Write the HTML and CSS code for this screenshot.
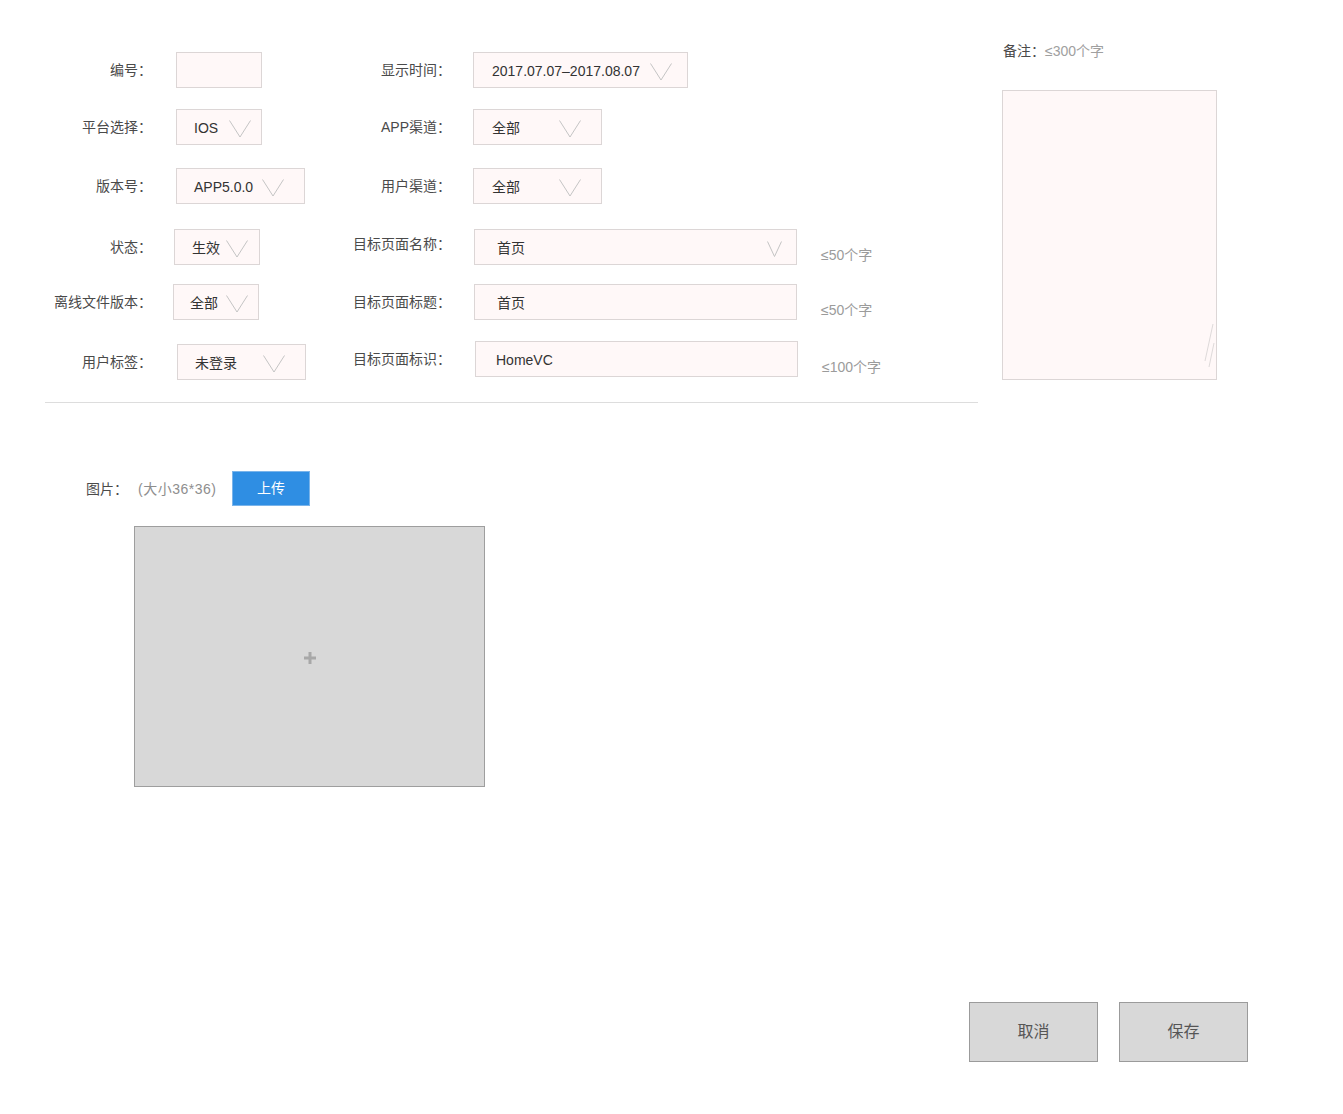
FILE: index.html
```html
<!DOCTYPE html>
<html lang="zh-CN">
<head>
<meta charset="utf-8">
<title>编辑</title>
<link rel="stylesheet" href="styles.css">
</head>
<body>
<div class="page">
  <div class="top">
    <div class="form">
      <div class="row">
        <div class="field-l">
          <span class="lbl lbl-l">编号：</span>
          <div class="box w86 ml24"></div>
        </div>
        <div class="field-r">
          <span class="lbl lbl-r">显示时间：</span>
          <div class="box sel w215 ml22 pl18 pr15"><span>2017.07.07–2017.08.07</span><svg class="chev" width="22" height="18" viewBox="0 0 22 18"><path d="M0.5 0.5 L11 17 L21.5 0.5"/></svg></div>
        </div>
      </div>
      <div class="row gap21">
        <div class="field-l">
          <span class="lbl lbl-l">平台选择：</span>
          <div class="box sel w86 ml24 pl17 pr10"><span>IOS</span><svg class="chev" width="22" height="18" viewBox="0 0 22 18"><path d="M0.5 0.5 L11 17 L21.5 0.5"/></svg></div>
        </div>
        <div class="field-r">
          <span class="lbl lbl-r">APP渠道：</span>
          <div class="box sel w129 ml22 pl18 pr20"><span>全部</span><svg class="chev" width="22" height="18" viewBox="0 0 22 18"><path d="M0.5 0.5 L11 17 L21.5 0.5"/></svg></div>
        </div>
      </div>
      <div class="row gap23">
        <div class="field-l">
          <span class="lbl lbl-l">版本号：</span>
          <div class="box sel w129 ml24 pl17 pr20"><span>APP5.0.0</span><svg class="chev" width="22" height="18" viewBox="0 0 22 18"><path d="M0.5 0.5 L11 17 L21.5 0.5"/></svg></div>
        </div>
        <div class="field-r">
          <span class="lbl lbl-r">用户渠道：</span>
          <div class="box sel w129 ml22 pl18 pr20"><span>全部</span><svg class="chev" width="22" height="18" viewBox="0 0 22 18"><path d="M0.5 0.5 L11 17 L21.5 0.5"/></svg></div>
        </div>
      </div>
      <div class="row gap25">
        <div class="field-l">
          <span class="lbl lbl-l">状态：</span>
          <div class="box sel w86 ml22 pl17 pr11"><span>生效</span><svg class="chev" width="22" height="18" viewBox="0 0 22 18"><path d="M0.5 0.5 L11 17 L21.5 0.5"/></svg></div>
        </div>
        <div class="field-r">
          <span class="lbl lbl-r up">目标页面名称：</span>
          <div class="box sel w323 ml23 pl22 pr14"><span>首页</span><svg class="chev" width="15" height="16" viewBox="0 0 15 16"><path d="M0.5 0.5 L7.5 15.5 L14.5 0.5"/></svg></div>
          <span class="hint">≤50个字</span>
        </div>
      </div>
      <div class="row gap19">
        <div class="field-l">
          <span class="lbl lbl-l">离线文件版本：</span>
          <div class="box sel w86 ml21 pl16 pr10"><span>全部</span><svg class="chev" width="22" height="18" viewBox="0 0 22 18"><path d="M0.5 0.5 L11 17 L21.5 0.5"/></svg></div>
        </div>
        <div class="field-r">
          <span class="lbl lbl-r">目标页面标题：</span>
          <div class="box w323 ml23 pl22"><span>首页</span></div>
          <span class="hint">≤50个字</span>
        </div>
      </div>
      <div class="row gap21">
        <div class="field-l low">
          <span class="lbl lbl-l">用户标签：</span>
          <div class="box sel w129 ml25 pl17 pr20"><span>未登录</span><svg class="chev" width="22" height="18" viewBox="0 0 22 18"><path d="M0.5 0.5 L11 17 L21.5 0.5"/></svg></div>
        </div>
        <div class="field-r">
          <span class="lbl lbl-r">目标页面标识：</span>
          <div class="box w323 ml24 pl20"><span>HomeVC</span></div>
          <span class="hint">≤100个字</span>
        </div>
      </div>
      <div class="divider"></div>
    </div>
    <aside class="note">
      <div class="note-head"><span class="lbl">备注：</span><span class="muted">≤300个字</span></div>
      <div class="note-area">
        <svg class="grip" width="12" height="48" viewBox="0 0 12 48"><path d="M10 1 L2 38 M11 20 L6 44"/></svg>
      </div>
    </aside>
  </div>

  <section class="upload">
    <div class="upload-row">
      <span class="lbl">图片：</span>
      <span class="upload-hint">(大小36*36)</span>
      <button class="btn-upload" type="button">上传</button>
    </div>
    <div class="pic">
      <svg width="12" height="12" viewBox="0 0 12 12"><path d="M6 0 V12 M0 6 H12"/></svg>
    </div>
  </section>

  <div class="actions">
    <button class="btn" type="button">取消</button>
    <button class="btn" type="button">保存</button>
  </div>
</div>
</body>
</html>
```

FILE: styles.css
```css
* { box-sizing: border-box; }

html, body {
  margin: 0;
  padding: 0;
  background: #ffffff;
}

body {
  font-family: "Liberation Sans", "Noto Sans CJK SC", sans-serif;
  font-size: 14px;
  line-height: 20px;
  color: #333333;
}

.page {
  width: 1343px;
  min-height: 1114px;
}

.top {
  display: flex;
  align-items: flex-start;
}

.form {
  width: 978px;
  padding-top: 52px;
}

.row {
  display: flex;
  align-items: center;
  height: 36px;
}

.gap19 { margin-top: 19px; }
.gap21 { margin-top: 21px; }
.gap23 { margin-top: 23px; }
.gap25 { margin-top: 25px; }

.field-l {
  width: 350px;
  display: flex;
  align-items: center;
}

.field-l.low { margin-top: 6px; }

.field-r {
  display: flex;
  align-items: center;
}

.lbl {
  color: #4a4a4a;
  white-space: nowrap;
}

.lbl-l {
  width: 152px;
  text-align: right;
}

.lbl-r {
  width: 101px;
  text-align: right;
}

.lbl-r.up { margin-bottom: 6px; }

.box {
  height: 36px;
  border: 1px solid #dcd6d6;
  background: #fff8f8;
  display: flex;
  align-items: center;
  color: #333333;
  white-space: nowrap;
}

.box span {
  margin-top: 2px;
}

.box.sel { justify-content: space-between; }

.chev {
  display: block;
  margin-top: 4px;
  flex: none;
}

.chev path {
  fill: none;
  stroke: #c4c4c4;
  stroke-width: 1;
}

.w86 { width: 86px; }
.w129 { width: 129px; }
.w215 { width: 215px; }
.w323 { width: 323px; }

.ml21 { margin-left: 21px; }
.ml22 { margin-left: 22px; }
.ml23 { margin-left: 23px; }
.ml24 { margin-left: 24px; }
.ml25 { margin-left: 25px; }

.pl16 { padding-left: 16px; }
.pl17 { padding-left: 17px; }
.pl18 { padding-left: 18px; }
.pl20 { padding-left: 20px; }
.pl22 { padding-left: 22px; }

.pr10 { padding-right: 10px; }
.pr11 { padding-right: 11px; }
.pr14 { padding-right: 14px; }
.pr15 { padding-right: 15px; }
.pr20 { padding-right: 20px; }

.hint {
  margin-left: 24px;
  margin-top: 16px;
  color: #9b9b9b;
  white-space: nowrap;
}

.divider {
  margin-top: 25px;
  margin-left: 45px;
  width: 933px;
  height: 1px;
  background: #dddddd;
}

.note {
  margin-left: 24px;
  padding-top: 41px;
}

.note-head {
  height: 20px;
  padding-left: 1px;
}

.muted { color: #a0a0a0; }

.note-area {
  position: relative;
  margin-top: 29px;
  width: 215px;
  height: 290px;
  border: 1px solid #dcd6d6;
  background: #fff8f8;
}

.grip {
  position: absolute;
  right: 1px;
  bottom: 8px;
}

.grip path {
  fill: none;
  stroke: #dedada;
  stroke-width: 1;
}

.upload {
  margin-top: 68px;
}

.upload-row {
  display: flex;
  align-items: center;
  height: 35px;
  padding-left: 86px;
}

.upload-hint {
  width: 94px;
  margin-left: 10px;
  color: #8e8e8e;
  letter-spacing: 0.5px;
  white-space: nowrap;
}

.btn-upload {
  width: 78px;
  height: 35px;
  margin: 0;
  padding: 0 0 3px;
  border: 1px solid #7ab4ea;
  background: #2f8ee3;
  color: #ffffff;
  font-family: inherit;
  font-size: 14px;
}

.pic {
  margin-top: 20px;
  margin-left: 134px;
  width: 351px;
  height: 261px;
  border: 1px solid #9e9e9e;
  background: #d8d8d8;
  display: flex;
  align-items: center;
  justify-content: center;
}

.pic svg {
  margin-top: 2px;
}

.pic path {
  fill: none;
  stroke: #a8a8a8;
  stroke-width: 3;
}

.actions {
  display: flex;
  justify-content: flex-end;
  gap: 21px;
  margin-top: 215px;
  padding-right: 95px;
}

.btn {
  width: 129px;
  height: 60px;
  margin: 0;
  padding: 0 0 4px;
  border: 1px solid #9b9b9b;
  background: #d8d8d8;
  color: #555555;
  font-family: inherit;
  font-size: 16px;
}
```
